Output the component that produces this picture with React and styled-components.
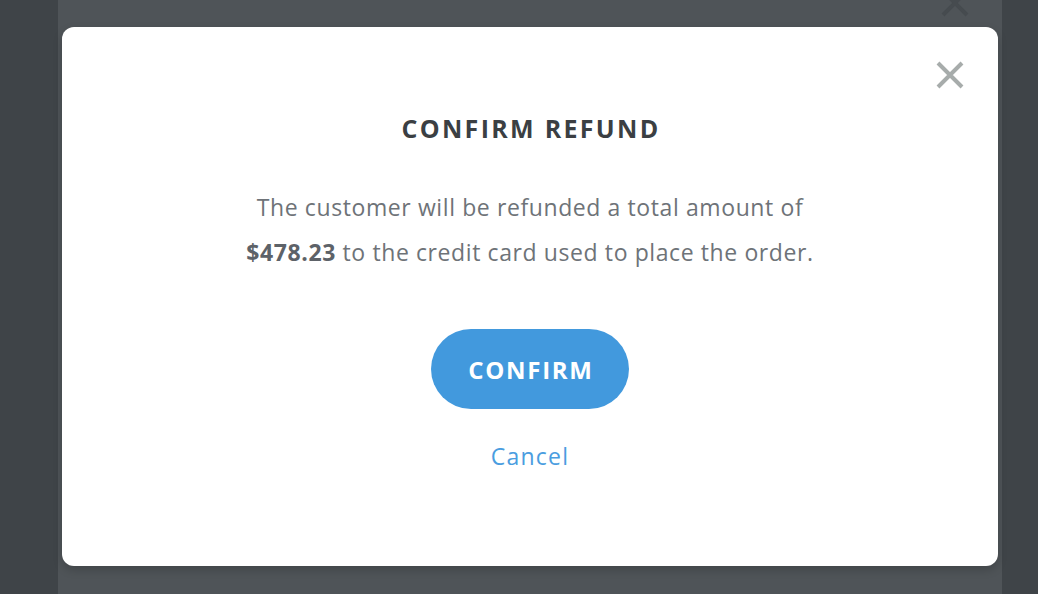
import React from "react";
import styled, { createGlobalStyle } from "styled-components";

const Global = createGlobalStyle`
  html, body { margin: 0; padding: 0; height: 100%; }
  body {
    background: #3f4448;
    font-family: "Open Sans", "Lato", sans-serif;
    overflow: hidden;
  }
  #root { height: 100%; }
`;

const Screen = styled.div`
  height: 594px;
  display: flex;
  padding-left: 58px;
`;

const Panel = styled.div`
  position: relative;
  width: 944px;
  background: #4f5458;
  padding: 27px 4px 0;
  box-sizing: border-box;
`;

const GhostClose = styled.div`
  position: absolute;
  top: -12px;
  right: 32px;
  width: 30px;
  height: 30px;
  color: #464b4f;
`;

const Modal = styled.div`
  position: relative;
  height: 539px;
  background: #ffffff;
  border-radius: 12px;
  box-shadow: 0 4px 10px rgba(0, 0, 0, 0.18);
  display: flex;
  flex-direction: column;
  align-items: center;
  padding-top: 86px;
  box-sizing: border-box;
`;

const CloseButton = styled.button`
  position: absolute;
  top: 33px;
  right: 33px;
  width: 30px;
  height: 30px;
  padding: 0;
  border: none;
  background: none;
  color: #a7acab;
  cursor: pointer;
`;

const Title = styled.h2`
  margin: 0;
  font-size: 25px;
  line-height: 30px;
  font-weight: 700;
  letter-spacing: 2.3px;
  text-indent: 2px;
  color: #3b3f43;
`;

const Message = styled.p`
  margin: 42px 0 0;
  font-size: 23px;
  line-height: 45px;
  letter-spacing: 0.6px;
  color: #6e7378;
  text-align: center;
`;

const Amount = styled.strong`
  font-weight: 700;
  color: #5d6268;
`;

const ConfirmButton = styled.button`
  margin-top: 54px;
  width: 198px;
  height: 80px;
  border: none;
  border-radius: 40px;
  background: #4299dd;
  color: #ffffff;
  font-family: inherit;
  font-size: 24px;
  font-weight: 700;
  letter-spacing: 1.7px;
  text-indent: 2px;
  cursor: pointer;
`;

const CancelLink = styled.a`
  margin-top: 33px;
  font-size: 23px;
  line-height: 28px;
  letter-spacing: 1.2px;
  color: #4a9de0;
  cursor: pointer;
`;

const XIcon = ({ stroke = 4 }) => (
  <svg width="100%" height="100%" viewBox="0 0 30 30" fill="none">
    <path d="M3 3 L27 27 M27 3 L3 27" stroke="currentColor" strokeWidth={stroke} />
  </svg>
);

export default function App() {
  return (
    <Screen>
      <Global />
      <Panel>
        <GhostClose>
          <XIcon />
        </GhostClose>
        <Modal>
          <CloseButton aria-label="Close">
            <XIcon />
          </CloseButton>
          <Title>CONFIRM REFUND</Title>
          <Message>
            The customer will be refunded a total amount of
            <br />
            <Amount>$478.23</Amount> to the credit card used to place the order.
          </Message>
          <ConfirmButton>CONFIRM</ConfirmButton>
          <CancelLink>Cancel</CancelLink>
        </Modal>
      </Panel>
    </Screen>
  );
}
